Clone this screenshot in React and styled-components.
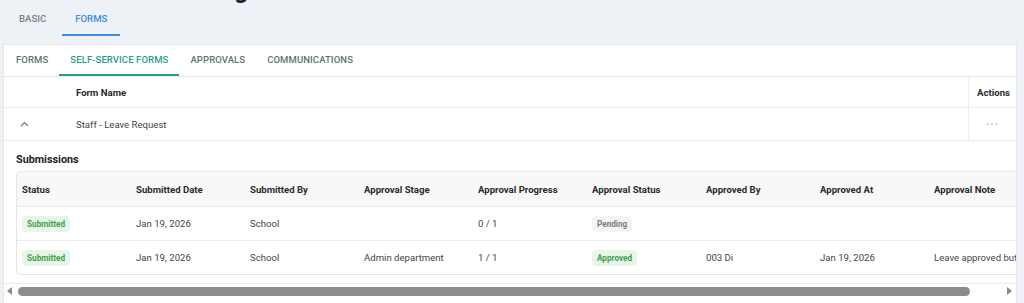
import styled, { createGlobalStyle } from "styled-components";

const GlobalStyle = createGlobalStyle`
  html, body {
    margin: 0;
    padding: 0;
    background: #eef1f6;
    font-family: Roboto, "Liberation Sans", Arial, sans-serif;
    overflow: hidden;
  }
`;

const submissions = [
  {
    status: "Submitted",
    date: "Jan 19, 2026",
    by: "School",
    stage: "",
    progress: "0 / 1",
    approval: "Pending",
    approvedBy: "",
    approvedAt: "",
    note: "",
  },
  {
    status: "Submitted",
    date: "Jan 19, 2026",
    by: "School",
    stage: "Admin department",
    progress: "1 / 1",
    approval: "Approved",
    approvedBy: "003 Di",
    approvedAt: "Jan 19, 2026",
    note: "Leave approved but the dates were adjusted",
  },
];

const columns = [
  "Status",
  "Submitted Date",
  "Submitted By",
  "Approval Stage",
  "Approval Progress",
  "Approval Status",
  "Approved By",
  "Approved At",
  "Approval Note",
];

const App = () => {
  return (
    <>
      <GlobalStyle />
      <Page>
        <TitleClip>
          <PageTitle>School Forms Configuration</PageTitle>
        </TitleClip>
        <TopTabs>
          <TopTab>BASIC</TopTab>
          <TopTab $active>FORMS</TopTab>
        </TopTabs>
        <Card>
          <InnerTabs>
            <InnerTab>FORMS</InnerTab>
            <InnerTab $active>SELF-SERVICE FORMS</InnerTab>
            <InnerTab>APPROVALS</InnerTab>
            <InnerTab>COMMUNICATIONS</InnerTab>
          </InnerTabs>

          <FormRow $head>
            <ExpandCell />
            <NameCell $head>Form Name</NameCell>
            <ActionCell $head>Actions</ActionCell>
          </FormRow>
          <FormRow>
            <ExpandCell>
              <svg width="9" height="6" viewBox="0 0 9 6">
                <polyline
                  points="1,5 4.5,1.5 8,5"
                  fill="none"
                  stroke="#777"
                  strokeWidth="1.2"
                />
              </svg>
            </ExpandCell>
            <NameCell>Staff - Leave Request</NameCell>
            <ActionCell>
              <Dots>···</Dots>
            </ActionCell>
          </FormRow>

          <Expanded>
            <SectionTitle>Submissions</SectionTitle>
            <ScrollArea>
              <SubTable>
                <SubHead>
                  {columns.map((c) => (
                    <SubCell key={c} $head>
                      {c}
                    </SubCell>
                  ))}
                </SubHead>
                {submissions.map((s, i) => (
                  <SubRow key={i}>
                    <SubCell>
                      <Badge $tone="green">{s.status}</Badge>
                    </SubCell>
                    <SubCell>{s.date}</SubCell>
                    <SubCell>{s.by}</SubCell>
                    <SubCell>{s.stage}</SubCell>
                    <SubCell>{s.progress}</SubCell>
                    <SubCell>
                      <Badge $tone={s.approval === "Approved" ? "green" : "gray"}>
                        {s.approval}
                      </Badge>
                    </SubCell>
                    <SubCell>{s.approvedBy}</SubCell>
                    <SubCell>{s.approvedAt}</SubCell>
                    <SubCell>{s.note}</SubCell>
                  </SubRow>
                ))}
              </SubTable>
            </ScrollArea>
            <ScrollBar>
              <Arrow $dir="left" />
              <Track>
                <Thumb />
              </Track>
              <Arrow $dir="right" />
            </ScrollBar>
          </Expanded>
        </Card>
      </Page>
    </>
  );
};

export default App;

const Page = styled.div`
  padding: 0 7px 0 3px;
`;

const TitleClip = styled.div`
  height: 3px;
  overflow: hidden;
  display: flex;
  align-items: flex-end;
  padding-left: 15px;
`;

const PageTitle = styled.div`
  font-size: 24.5px;
  font-weight: 700;
  line-height: 26px;
  color: #1f2329;
  white-space: nowrap;
`;

const TopTabs = styled.div`
  display: flex;
  gap: 3px;
  padding-left: 3px;
  margin-bottom: 8px;
`;

const TopTab = styled.div`
  padding: 0 13px;
  height: 31px;
  display: flex;
  align-items: center;
  font-size: 9.6px;
  font-weight: 500;
  color: ${(p) => (p.$active ? "#3a8ee6" : "#7a7f87")};
  border-bottom: 2px solid ${(p) => (p.$active ? "#3a8ee6" : "transparent")};
`;

const Card = styled.div`
  background: #fff;
  border: 1px solid #e4e7ec;
  border-bottom: none;
  height: 300px;
`;

const InnerTabs = styled.div`
  display: flex;
  padding-left: 1px;
  border-bottom: 1px solid #e8e8e8;
`;

const InnerTab = styled.div`
  padding: 0 11px;
  height: 29px;
  display: flex;
  align-items: center;
  font-size: 9.5px;
  font-weight: 500;
  letter-spacing: 0.1px;
  color: ${(p) => (p.$active ? "#2a9d8a" : "#5b7470")};
  border-bottom: 2px solid ${(p) => (p.$active ? "#2a9d8a" : "transparent")};
`;

const FormRow = styled.div`
  display: grid;
  grid-template-columns: 58px 1fr 48px;
  height: ${(p) => (p.$head ? "30px" : "32px")};
  border-bottom: 1px solid #ececec;
`;

const ExpandCell = styled.div`
  display: flex;
  align-items: center;
  padding-left: 16px;
`;

const NameCell = styled.div`
  display: flex;
  align-items: center;
  padding-left: 14px;
  font-size: 9.6px;
  font-weight: ${(p) => (p.$head ? 700 : 400)};
  color: ${(p) => (p.$head ? "#2b2b2b" : "#444")};
`;

const ActionCell = styled.div`
  display: flex;
  align-items: center;
  justify-content: ${(p) => (p.$head ? "flex-start" : "center")};
  padding-left: ${(p) => (p.$head ? "8px" : "0")};
  border-left: 1px solid #ececec;
  font-size: 9.6px;
  font-weight: 700;
  color: #2b2b2b;
`;

const Dots = styled.span`
  color: #b0b0b0;
  font-size: 11px;
  letter-spacing: 1px;
`;

const Expanded = styled.div`
  padding-top: 12px;
`;

const SectionTitle = styled.div`
  padding-left: 12px;
  font-size: 10.8px;
  font-weight: 700;
  color: #222;
  height: 18px;
  line-height: 14px;
`;

const ScrollArea = styled.div`
  overflow: hidden;
  padding: 0 0 8px 12px;
`;

const SubTable = styled.div`
  width: max-content;
  border: 1px solid #e6e6e6;
  border-radius: 4px;
  overflow: hidden;
`;

const SubHead = styled.div`
  display: grid;
  grid-template-columns: repeat(9, 114px);
  height: 34px;
  background: #f8f8f8;
  border-bottom: 1px solid #e8e8e8;
`;

const SubRow = styled.div`
  display: grid;
  grid-template-columns: repeat(9, 114px);
  height: 33px;
  & + & {
    border-top: 1px solid #ececec;
  }
`;

const SubCell = styled.div`
  display: flex;
  align-items: center;
  padding-left: 5px;
  font-size: 9.6px;
  font-weight: ${(p) => (p.$head ? 700 : 400)};
  color: ${(p) => (p.$head ? "#2b2b2b" : "#444")};
  white-space: nowrap;
`;

const Badge = styled.span`
  display: inline-block;
  padding: 3px 5px;
  border-radius: 4px;
  font-size: 8.2px;
  font-weight: 700;
  background: ${(p) => (p.$tone === "green" ? "#e7f6e9" : "#f4f4f4")};
  color: ${(p) => (p.$tone === "green" ? "#3f9f4f" : "#7c7c7c")};
`;

const ScrollBar = styled.div`
  display: flex;
  align-items: center;
  height: 14px;
  padding: 0 4px 0 3px;
  border-top: 1px solid #ececec;
`;

const Arrow = styled.div`
  width: 0;
  height: 0;
  border-top: 4px solid transparent;
  border-bottom: 4px solid transparent;
  ${(p) =>
    p.$dir === "left"
      ? "border-right: 5px solid #8a8a8a; margin-right: 6px;"
      : "border-left: 5px solid #8a8a8a; margin-left: 5px;"}
`;

const Track = styled.div`
  flex: 1;
  display: flex;
  align-items: center;
`;

const Thumb = styled.div`
  width: 952px;
  height: 9px;
  border-radius: 5px;
  background: #8c8c8c;
`;
